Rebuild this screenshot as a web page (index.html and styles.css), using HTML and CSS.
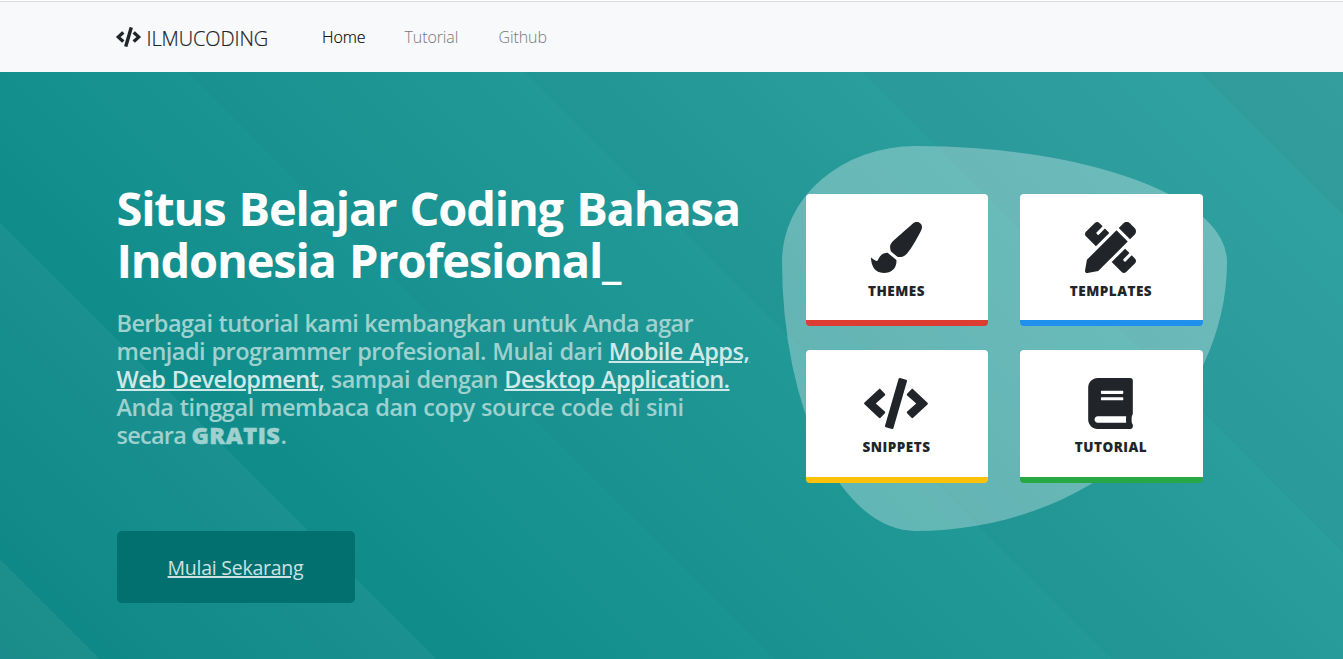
FILE: index.html
```html
<!DOCTYPE html>
<html lang="id">
<head>
<meta charset="utf-8">
<title>ILMUCODING</title>
<link rel="stylesheet" href="styles.css">
</head>
<body>
<svg class="defs" aria-hidden="true">
  <symbol id="code" viewBox="0 0 640 512"><path d="M278.900 511.500l-61-17.700c-6.400-1.800-10-8.500-8.200-14.900L346.200 8.700c1.800-6.400 8.500-10 14.900-8.200l61 17.700c6.400 1.800 10 8.500 8.200 14.900L293.800 503.300c-1.900 6.400-8.500 10.100-14.900 8.200zm-114-112.200l43.500-46.400c4.600-4.900 4.300-12.700-.8-17.200L117 256l90.600-79.700c5.100-4.500 5.500-12.300.8-17.200l-43.500-46.400c-4.500-4.800-12.100-5.100-17-.5L3.800 247.200c-5.100 4.700-5.100 12.800 0 17.500l144.100 135.100c4.900 4.600 12.500 4.400 17-.5zm327.200.6l144.100-135.100c5.100-4.700 5.100-12.800 0-17.500L492.100 112.100c-4.800-4.500-12.400-4.300-17 .5L431.600 159c-4.600 4.900-4.300 12.700.8 17.200L523 256l-90.600 79.700c-5.100 4.500-5.500 12.300-.8 17.200l43.500 46.400c4.500 4.900 12.100 5.100 17 .6z"/></symbol>
</svg>
<nav class="navbar">
  <div class="container nav-inner">
    <a class="brand"><svg class="brand-icon"><use href="#code"/></svg><span class="brand-text">ILMUCODING</span></a>
    <a class="nav-link home active">Home</a>
    <a class="nav-link tutorial">Tutorial</a>
    <a class="nav-link github">Github</a>
  </div>
</nav>
<main class="hero">
  <div class="container hero-inner">
    <section class="intro">
      <h1>Situs Belajar Coding Bahasa<br>Indonesia Profesional_</h1>
      <p class="lead"><span class="tight">Berbagai tutorial kami kembangkan untuk Anda agar</span><br><span class="snug">menjadi programmer profesional. Mulai dari <u>Mobile Apps,</u></span><br><span class="snug"><u>Web Development,</u> sampai dengan <u>Desktop Application.</u></span><br><span class="loose">Anda tinggal membaca dan copy source code di sini</span><br><span class="last">secara <b>GRATIS</b>.</span></p>
      <a class="cta">Mulai Sekarang</a>
    </section>
    <section class="cards">
      <a class="card red">
        <svg class="icon" viewBox="0 0 512 512"><path d="M167.020 309.340c-40.120 2.580-76.530 17.860-97.190 72.300-2.350 6.210-8 9.980-14.590 9.980-11.110 0-45.460-27.670-55.250-34.350C0 439.620 37.930 512 128 512c75.860 0 128-43.770 128-120.190 0-3.110-.65-6.080-.97-9.130l-88.010-73.340zM457.890 0c-15.160 0-29.370 6.710-40.210 16.450C213.270 199.050 192 203.340 192 257.090c0 13.700 3.250 26.760 8.730 38.700l63.820 53.180c7.210 1.800 14.640 3.030 22.390 3.030 62.110 0 98.110-45.470 211.160-256.460 7.380-14.350 13.900-29.850 13.900-45.990C512 20.640 486 0 457.890 0z"/></svg>
        <span>THEMES</span>
      </a>
      <a class="card blue">
        <svg class="icon" viewBox="0 0 512 512"><path d="M109.460 244.040l134.580-134.560-44.120-44.120-61.680 61.680a7.919 7.919 0 0 1-11.210 0l-11.210-11.210c-3.100-3.100-3.100-8.120 0-11.210l61.680-61.680-33.640-33.650C131.470-3.100 111.390-3.100 99 9.290L9.290 99c-12.380 12.390-12.390 32.470 0 44.860l100.170 100.180zm388.470-116.800c18.760-18.760 18.750-49.170 0-67.930l-45.250-45.250c-18.760-18.760-49.180-18.760-67.950 0l-46.020 46.010 113.200 113.200 46.020-46.030zM316.080 82.710l-297 296.960L.32 487.110c-2.530 14.490 10.090 27.110 24.590 24.560l107.450-18.840L429.280 195.900 316.080 82.710zm186.630 285.430l-33.640-33.640-61.680 61.680c-3.100 3.100-8.120 3.100-11.210 0l-11.210-11.210c-3.090-3.100-3.090-8.120 0-11.210l61.680-61.680-44.140-44.140L267.930 402.500l100.210 100.200c12.390 12.390 32.470 12.390 44.860 0l89.710-89.700c12.390-12.390 12.390-32.470 0-44.860z"/></svg>
        <span>TEMPLATES</span>
      </a>
      <a class="card yellow">
        <svg class="icon wide"><use href="#code"/></svg>
        <span>SNIPPETS</span>
      </a>
      <a class="card green">
        <svg class="icon book" viewBox="0 0 448 512"><path d="M448 360V24c0-13.300-10.700-24-24-24H96C43 0 0 43 0 96v320c0 53 43 96 96 96h328c13.300 0 24-10.700 24-24v-16c0-7.500-3.500-14.300-8.900-18.700-4.200-15.400-4.200-59.300 0-74.700 5.400-4.300 8.900-11.100 8.900-18.600zM128 134c0-3.300 2.700-6 6-6h212c3.300 0 6 2.700 6 6v20c0 3.300-2.700 6-6 6H134c-3.300 0-6-2.700-6-6v-20zm0 64c0-3.300 2.700-6 6-6h212c3.300 0 6 2.700 6 6v20c0 3.300-2.700 6-6 6H134c-3.300 0-6-2.700-6-6v-20zm253.400 250H96c-17.700 0-32-14.300-32-32 0-17.600 14.400-32 32-32h285.400c-1.900 17.100-1.900 46.900 0 64z"/></svg>
        <span>TUTORIAL</span>
      </a>
    </section>
  </div>
</main>
</body>
</html>
```
FILE: styles.css
```css
* { box-sizing: border-box; }
body { margin: 0; font-family: "Open Sans", "Noto Sans", sans-serif; color: #212529; overflow: hidden; }
.defs { position: absolute; width: 0; height: 0; }
.container { width: 1110px; margin-left: 116.5px; }
.navbar { height: 72px; background: #f8f9fb; border-top: 1px solid #fff; box-shadow: inset 0 1px #d9dcdf; }
.nav-inner { display: flex; align-items: center; height: 72px; }
.brand { display: flex; align-items: center; gap: 5.5px; width: 205.5px; font-size: 20px; font-weight: 300; letter-spacing: -.1px; white-space: nowrap; -webkit-text-stroke: .2px #212529; }
.brand-text { padding-top: 2px; }
.brand-icon { width: 25px; height: 20px; margin-left: -.5px; fill: #212529; }
.nav-link { font-size: 16px; font-weight: 300; color: #777; white-space: nowrap; letter-spacing: -.1px; }
.nav-link.active { color: #000; -webkit-text-stroke: .15px #000; }
.home { width: 82.5px; }
.tutorial { width: 94px; }
.hero { height: 587px; background: linear-gradient(45deg,
  #1a8b8a 0, #1c8f8d 70.3px,
  #0f8888 70.3px, #1a9190 309px,
  #0f8c8a 309px, #199492 547.700px,
  #199190 547.700px, #219997 786px,
  #219494 786px, #299e9c 1025px,
  #2a9999 1025px, #30a1a1 1263.600px,
  #319b9b 1263.600px, #349e9e 100%); }
.hero-inner { display: flex; height: 587px; }
.intro { width: 665.5px; padding-top: 110px; }
h1 { margin: 0; font-size: 47px; line-height: 52px; font-weight: 700; letter-spacing: -1.2px; word-spacing: 2.2px; color: #fff; white-space: nowrap; }
.lead { margin: 23px 0 0; font-size: 23.5px; line-height: 28px; font-weight: 600; color: #9fd1cf; white-space: nowrap; }
.lead u { color: #d0e9e8; text-decoration-thickness: 2px; }
.lead b { font-weight: 800; letter-spacing: .5px; -webkit-text-stroke: .5px #9fd1cf; }
.tight { letter-spacing: -.6px; word-spacing: .6px; }
.snug { letter-spacing: -.52px; word-spacing: .8px; }
.loose { letter-spacing: -.42px; word-spacing: .5px; }
.last { letter-spacing: -.75px; }
.cta { display: flex; align-items: center; justify-content: center; width: 238px; height: 72px; margin: 82px 0 0 .5px; padding-right: 1px; border-radius: 5px; background: #02706e; color: #cce2e2; font-size: 19.5px; letter-spacing: -.25px; text-decoration: underline; text-decoration-thickness: 2px; white-space: nowrap; }
.cards { display: grid; grid-template-columns: 182px 183px; grid-template-rows: 132px 133px; gap: 24px 32px; width: 445px; height: 385px; margin-top: 74px; padding: 48px 24px; background: rgba(255,255,255,.3); border-radius: 30% 70% 70% 30% / 30% 30% 70% 70%; }
.card { display: flex; flex-direction: column; align-items: center; padding-top: 28px; background: #fff; border-radius: 4px; border-bottom: 6px solid; font-size: 13.5px; line-height: 21px; font-weight: 800; letter-spacing: .5px; }
.card span { color: #212529; margin-top: 8px; }
.icon { width: 51px; height: 51px; margin-left: -1px; fill: #212529; }
.wide { width: 64px; }
.book { width: 45px; }
.red { border-color: #dc3c31; }
.blue { border-color: #2090ee; }
.yellow { border-color: #ffc107; }
.green { border-color: #28a745; }
```
